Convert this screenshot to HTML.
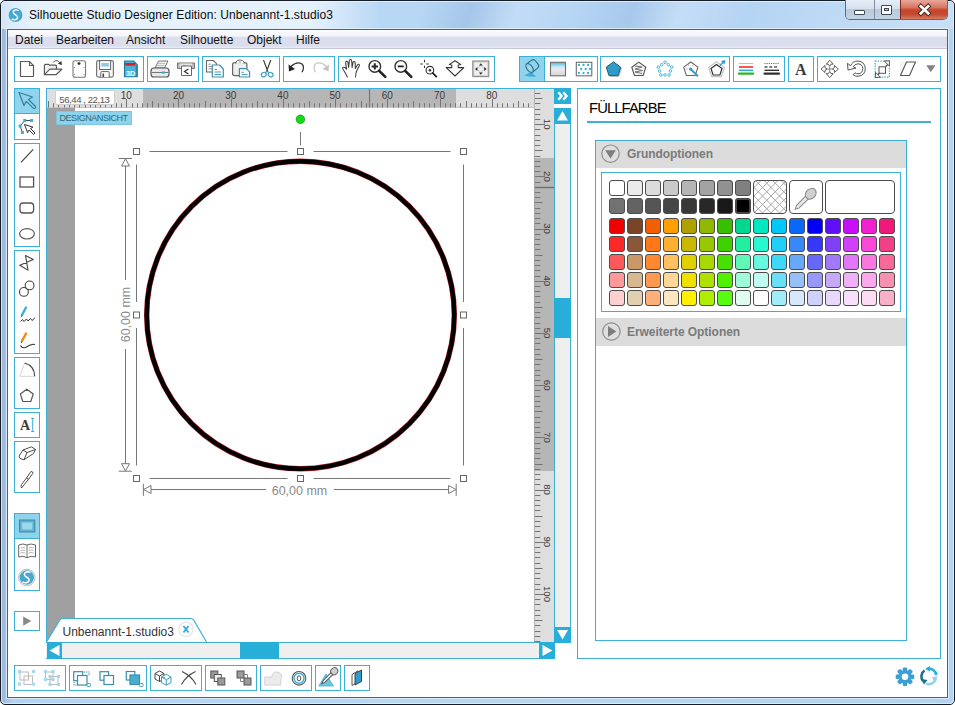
<!DOCTYPE html>
<html><head><meta charset="utf-8">
<style>
*{margin:0;padding:0;box-sizing:border-box}
html,body{width:955px;height:705px;overflow:hidden;background:#fff;font-family:"Liberation Sans",sans-serif}
.a{position:absolute}
.t{position:absolute;white-space:nowrap;line-height:1}
svg{position:absolute;overflow:visible}
</style></head><body>
<div class="a" style="left:0px;top:0px;width:955px;height:705px;border:1px solid #161d26;border-radius:5px 5px 5px 5px;background:linear-gradient(90deg,#98b4d6 0,#a4c2e6 5px,#b4d3f3 12px,#b8d7f5 40%,#b3d3f3 100%)"></div>
<div class="a" style="left:1px;top:1px;width:953px;height:703px;border:1px solid rgba(235,244,252,.75);border-radius:4px"></div>
<div class="a" style="left:2px;top:2px;width:951px;height:27px;border-radius:5px 5px 0 0;background:linear-gradient(110deg,rgba(255,255,255,0) 0,rgba(255,255,255,0) 44%,rgba(150,185,225,.55) 49%,rgba(255,255,255,.15) 54%,rgba(255,255,255,0) 60%,rgba(150,185,225,.45) 66%,rgba(255,255,255,.2) 71%,rgba(255,255,255,0) 78%,rgba(255,255,255,.25) 95%)"></div>
<div class="a" style="left:1px;top:1px;width:380px;height:28px;border-radius:5px 0 0 0;background:linear-gradient(90deg,rgba(225,238,251,.8) 0,rgba(236,245,253,.88) 8%,rgba(236,245,253,.88) 82%,rgba(230,240,252,0) 100%)"></div>
<div class="a" style="left:6px;top:28px;width:943px;height:671px;border:1px solid rgba(225,238,250,.85)"></div>
<svg style="left:7px;top:7px" width="17" height="17" viewBox="0 0 17 17" ><circle cx="8.5" cy="8" r="7.6" fill="#e9f1f8"/><circle cx="8.5" cy="8" r="7" fill="#47a9d0"/><path d="M11.2 3.3C9.2 2.3 5.6 3.2 6.5 5.9 7.3 8 11.2 8 10.6 10.7 10.1 12.6 7.4 13.3 5.1 12.2" stroke="#fff" stroke-width="1.4" fill="none" stroke-linecap="round"/></svg>
<div class="t" style="left:29px;top:8.5px;font-size:12px;letter-spacing:0.07px;color:#0c0c0c">Silhouette Studio Designer Edition: Unbenannt-1.studio3</div>
<div class="a" style="left:845px;top:0;width:103px;height:20px;border:1px solid #5d6b7d;border-top:none;border-radius:0 0 5px 5px;overflow:hidden">
 <div class="a" style="left:0;top:0;width:28px;height:19px;background:linear-gradient(#e7eef7 0,#d5e0ed 45%,#b9c9dc 50%,#c5d3e3 100%)"></div>
 <div class="a" style="left:28px;top:0;width:26px;height:19px;border-left:1px solid #7f8ea2;background:linear-gradient(#e7eef7 0,#d5e0ed 45%,#b9c9dc 50%,#c5d3e3 100%)"></div>
 <div class="a" style="left:54px;top:0;width:48px;height:19px;border-left:1px solid #7a2a1c;background:linear-gradient(#e8a89a 0,#d67560 40%,#c8452a 52%,#c34a2e 75%,#d77a5e 100%)"></div>
</div>
<div class="a" style="left:854px;top:10px;width:11px;height:5px;border:1px solid #3d4a5a;background:#fff;border-radius:1px"></div>
<div class="a" style="left:881px;top:5px;width:11px;height:10px;border:1px solid #3d4a5a;background:#fff;border-radius:1px"></div>
<div class="a" style="left:884px;top:8px;width:5px;height:3px;border:1px solid #3d4a5a;background:#b9c7d8"></div>
<svg style="left:0px;top:0px" width="955" height="30" viewBox="0 0 955 30" ><path d="M920.8 6.3 L928.2 13.3 M928.2 6.3 L920.8 13.3" stroke="#4a2622" stroke-width="4.6" stroke-linecap="square"/><path d="M920.8 6.3 L928.2 13.3 M928.2 6.3 L920.8 13.3" stroke="#fff" stroke-width="2.7" stroke-linecap="square"/></svg>
<div class="a" style="left:7px;top:29px;width:941px;height:669px;border:1px solid #56616e;background:#fff"></div>
<div class="a" style="left:8px;top:30px;width:939px;height:19px;background:linear-gradient(#fcfcfe 0,#f3f4f9 6px,#dcdfee 7.5px,#d9ddec 16px,#e6e9f3 17px,#e6e9f3 18px,#c3c8d8 18px)"></div>
<div class="t" style="left:15px;top:34px;font-size:12px;color:#141414">Datei</div>
<div class="t" style="left:56px;top:34px;font-size:12px;color:#141414">Bearbeiten</div>
<div class="t" style="left:126px;top:34px;font-size:12px;color:#141414">Ansicht</div>
<div class="t" style="left:180px;top:34px;font-size:12px;color:#141414">Silhouette</div>
<div class="t" style="left:247px;top:34px;font-size:12px;color:#141414">Objekt</div>
<div class="t" style="left:296px;top:34px;font-size:12px;color:#141414">Hilfe</div>
<div class="a" style="left:14px;top:56px;width:130px;height:26px;border:1px solid #3cb0d7;background:#fff"></div>
<div class="a" style="left:147px;top:56px;width:52px;height:26px;border:1px solid #3cb0d7;background:#fff"></div>
<div class="a" style="left:202px;top:56px;width:78px;height:26px;border:1px solid #3cb0d7;background:#fff"></div>
<div class="a" style="left:283px;top:56px;width:52px;height:26px;border:1px solid #3cb0d7;background:#fff"></div>
<div class="a" style="left:338px;top:56px;width:157px;height:26px;border:1px solid #3cb0d7;background:#fff"></div>
<div class="a" style="left:519px;top:56px;width:79px;height:26px;border:1px solid #3cb0d7;background:#fff"></div>
<div class="a" style="left:600px;top:56px;width:130px;height:26px;border:1px solid #3cb0d7;background:#fff"></div>
<div class="a" style="left:733px;top:56px;width:52px;height:26px;border:1px solid #3cb0d7;background:#fff"></div>
<div class="a" style="left:788px;top:56px;width:26px;height:26px;border:1px solid #3cb0d7;background:#fff"></div>
<div class="a" style="left:817px;top:56px;width:124px;height:26px;border:1px solid #3cb0d7;background:#fff"></div>
<div class="a" style="left:520px;top:57px;width:25px;height:24px;background:#8fd4ec;border-right:1px solid #3cb0d7"></div>
<div class="a" style="left:14px;top:88px;width:26px;height:52px;border:1px solid #3cb0d7;background:#fff"></div>
<div class="a" style="left:14px;top:143px;width:26px;height:104px;border:1px solid #3cb0d7;background:#fff"></div>
<div class="a" style="left:14px;top:250px;width:26px;height:104px;border:1px solid #3cb0d7;background:#fff"></div>
<div class="a" style="left:14px;top:357px;width:26px;height:52px;border:1px solid #3cb0d7;background:#fff"></div>
<div class="a" style="left:14px;top:412px;width:26px;height:26px;border:1px solid #3cb0d7;background:#fff"></div>
<div class="a" style="left:14px;top:441px;width:26px;height:52px;border:1px solid #3cb0d7;background:#fff"></div>
<div class="a" style="left:14px;top:513px;width:26px;height:78px;border:1px solid #3cb0d7;background:#fff"></div>
<div class="a" style="left:14px;top:611px;width:26px;height:20px;border:1px solid #3cb0d7;background:#fff"></div>
<div class="a" style="left:15px;top:89px;width:24px;height:25px;background:#8fd4ec;border-bottom:1px solid #3cb0d7"></div>
<div class="a" style="left:15px;top:514px;width:24px;height:25px;background:#8fd4ec;border-bottom:1px solid #3cb0d7"></div>
<div class="a" style="left:14px;top:665px;width:52px;height:26px;border:1px solid #3cb0d7;background:#fff"></div>
<div class="a" style="left:69px;top:665px;width:78px;height:26px;border:1px solid #3cb0d7;background:#fff"></div>
<div class="a" style="left:150px;top:665px;width:52px;height:26px;border:1px solid #3cb0d7;background:#fff"></div>
<div class="a" style="left:205px;top:665px;width:52px;height:26px;border:1px solid #3cb0d7;background:#fff"></div>
<div class="a" style="left:260px;top:665px;width:52px;height:26px;border:1px solid #3cb0d7;background:#fff"></div>
<div class="a" style="left:315px;top:665px;width:26px;height:26px;border:1px solid #3cb0d7;background:#fff"></div>
<div class="a" style="left:344px;top:665px;width:26px;height:26px;border:1px solid #3cb0d7;background:#fff"></div>
<div class="a" style="left:46px;top:88px;width:509px;height:571px;border:1px solid #3cb0d7;border-right:none;background:#fff"></div>
<div class="a" style="left:47px;top:89px;width:487px;height:19px;background:#dedede"></div>
<div class="a" style="left:143px;top:89px;width:313px;height:19px;background:#b6b6b6"></div>
<div class="a" style="left:47px;top:107px;width:507px;height:1px;background:#c9c9c9"></div>
<div class="a" style="left:534px;top:89px;width:20px;height:553px;background:#dedede;border-left:1px solid #b4b4b4"></div>
<div class="a" style="left:534px;top:158px;width:20px;height:313px;background:#b6b6b6;border-left:1px solid #a2a2a2"></div>
<div class="a" style="left:47px;top:108px;width:28px;height:534px;background:#a0a0a0"></div>
<div class="a" style="left:554px;top:88px;width:17px;height:16px;background:#27aed9"></div>
<div class="a" style="left:554px;top:108px;width:17px;height:535px;background:#efefef;border:1px solid #3cb0d7;border-top:none"></div>
<div class="a" style="left:554px;top:108px;width:17px;height:16px;background:#27aed9"></div>
<div class="a" style="left:554px;top:298px;width:17px;height:40px;background:#27aed9"></div>
<div class="a" style="left:554px;top:627px;width:17px;height:16px;background:#27aed9"></div>
<div class="a" style="left:46px;top:642px;width:509px;height:17px;background:#efefef;border-top:1px solid #3cb0d7;border-bottom:1px solid #3cb0d7"></div>
<div class="a" style="left:47px;top:642px;width:15px;height:17px;background:#27aed9"></div>
<div class="a" style="left:240px;top:642px;width:39px;height:17px;background:#27aed9"></div>
<div class="a" style="left:539px;top:642px;width:16px;height:17px;background:#27aed9"></div>
<div class="a" style="left:577px;top:88px;width:364px;height:571px;border:1px solid #3cb0d7;background:#fff"></div>
<div class="t" style="left:589px;top:101px;font-size:14.8px;color:#000;letter-spacing:-0.9px">FÜLLFARBE</div>
<div class="a" style="left:587px;top:121px;width:344px;height:2px;background:#3cb0d7"></div>
<div class="a" style="left:595px;top:140px;width:312px;height:501px;border:1px solid #3cb0d7;background:#fff"></div>
<div class="a" style="left:596px;top:141px;width:310px;height:27px;background:#dcdcdc"></div>
<div class="t" style="left:627px;top:148px;font-size:12px;color:#7a7a7a;font-weight:bold;letter-spacing:-0.05px">Grundoptionen</div>
<div class="a" style="left:601px;top:172px;width:300px;height:140px;border:1px solid #3cb0d7;background:#fff"></div>
<div class="a" style="left:596px;top:318px;width:310px;height:28px;background:#dcdcdc"></div>
<div class="t" style="left:627px;top:326px;font-size:12px;color:#7a7a7a;font-weight:bold;letter-spacing:-0.05px">Erweiterte Optionen</div>
<div class="a" style="left:609px;top:180px;width:16px;height:16px;background:#ffffff;border:1px solid #4d4d4d;border-radius:3px;"></div>
<div class="a" style="left:627px;top:180px;width:16px;height:16px;background:#ebebeb;border:1px solid #4d4d4d;border-radius:3px;"></div>
<div class="a" style="left:645px;top:180px;width:16px;height:16px;background:#dcdcdc;border:1px solid #4d4d4d;border-radius:3px;"></div>
<div class="a" style="left:663px;top:180px;width:16px;height:16px;background:#c9c9c9;border:1px solid #4d4d4d;border-radius:3px;"></div>
<div class="a" style="left:681px;top:180px;width:16px;height:16px;background:#b5b5b5;border:1px solid #4d4d4d;border-radius:3px;"></div>
<div class="a" style="left:699px;top:180px;width:16px;height:16px;background:#a3a3a3;border:1px solid #4d4d4d;border-radius:3px;"></div>
<div class="a" style="left:717px;top:180px;width:16px;height:16px;background:#919191;border:1px solid #4d4d4d;border-radius:3px;"></div>
<div class="a" style="left:735px;top:180px;width:16px;height:16px;background:#808080;border:1px solid #4d4d4d;border-radius:3px;"></div>
<div class="a" style="left:609px;top:198px;width:16px;height:16px;background:#727272;border:1px solid #4d4d4d;border-radius:3px;"></div>
<div class="a" style="left:627px;top:198px;width:16px;height:16px;background:#636363;border:1px solid #4d4d4d;border-radius:3px;"></div>
<div class="a" style="left:645px;top:198px;width:16px;height:16px;background:#555555;border:1px solid #4d4d4d;border-radius:3px;"></div>
<div class="a" style="left:663px;top:198px;width:16px;height:16px;background:#464646;border:1px solid #4d4d4d;border-radius:3px;"></div>
<div class="a" style="left:681px;top:198px;width:16px;height:16px;background:#383838;border:1px solid #4d4d4d;border-radius:3px;"></div>
<div class="a" style="left:699px;top:198px;width:16px;height:16px;background:#282828;border:1px solid #4d4d4d;border-radius:3px;"></div>
<div class="a" style="left:717px;top:198px;width:16px;height:16px;background:#181818;border:1px solid #4d4d4d;border-radius:3px;"></div>
<div class="a" style="left:735px;top:198px;width:16px;height:16px;background:#000000;border:1px solid #4d4d4d;border-radius:3px;border:2px solid #474747"></div>
<div class="a" style="left:609px;top:218px;width:16px;height:16px;background:#f00000;border:1px solid #4d4d4d;border-radius:3px;"></div>
<div class="a" style="left:627px;top:218px;width:16px;height:16px;background:#7a4428;border:1px solid #4d4d4d;border-radius:3px;"></div>
<div class="a" style="left:645px;top:218px;width:16px;height:16px;background:#f06000;border:1px solid #4d4d4d;border-radius:3px;"></div>
<div class="a" style="left:663px;top:218px;width:16px;height:16px;background:#ffa000;border:1px solid #4d4d4d;border-radius:3px;"></div>
<div class="a" style="left:681px;top:218px;width:16px;height:16px;background:#b0a000;border:1px solid #4d4d4d;border-radius:3px;"></div>
<div class="a" style="left:699px;top:218px;width:16px;height:16px;background:#90b800;border:1px solid #4d4d4d;border-radius:3px;"></div>
<div class="a" style="left:717px;top:218px;width:16px;height:16px;background:#38c000;border:1px solid #4d4d4d;border-radius:3px;"></div>
<div class="a" style="left:735px;top:218px;width:16px;height:16px;background:#00d890;border:1px solid #4d4d4d;border-radius:3px;"></div>
<div class="a" style="left:753px;top:218px;width:16px;height:16px;background:#00e8c0;border:1px solid #4d4d4d;border-radius:3px;"></div>
<div class="a" style="left:771px;top:218px;width:16px;height:16px;background:#00c8f8;border:1px solid #4d4d4d;border-radius:3px;"></div>
<div class="a" style="left:789px;top:218px;width:16px;height:16px;background:#0868f8;border:1px solid #4d4d4d;border-radius:3px;"></div>
<div class="a" style="left:807px;top:218px;width:16px;height:16px;background:#0000f8;border:1px solid #4d4d4d;border-radius:3px;"></div>
<div class="a" style="left:825px;top:218px;width:16px;height:16px;background:#6010f8;border:1px solid #4d4d4d;border-radius:3px;"></div>
<div class="a" style="left:843px;top:218px;width:16px;height:16px;background:#c810f8;border:1px solid #4d4d4d;border-radius:3px;"></div>
<div class="a" style="left:861px;top:218px;width:16px;height:16px;background:#f020d0;border:1px solid #4d4d4d;border-radius:3px;"></div>
<div class="a" style="left:879px;top:218px;width:16px;height:16px;background:#f01878;border:1px solid #4d4d4d;border-radius:3px;"></div>
<div class="a" style="left:609px;top:236px;width:16px;height:16px;background:#ff2828;border:1px solid #4d4d4d;border-radius:3px;"></div>
<div class="a" style="left:627px;top:236px;width:16px;height:16px;background:#8a5838;border:1px solid #4d4d4d;border-radius:3px;"></div>
<div class="a" style="left:645px;top:236px;width:16px;height:16px;background:#ff7818;border:1px solid #4d4d4d;border-radius:3px;"></div>
<div class="a" style="left:663px;top:236px;width:16px;height:16px;background:#ffb030;border:1px solid #4d4d4d;border-radius:3px;"></div>
<div class="a" style="left:681px;top:236px;width:16px;height:16px;background:#c8b800;border:1px solid #4d4d4d;border-radius:3px;"></div>
<div class="a" style="left:699px;top:236px;width:16px;height:16px;background:#98c800;border:1px solid #4d4d4d;border-radius:3px;"></div>
<div class="a" style="left:717px;top:236px;width:16px;height:16px;background:#40d000;border:1px solid #4d4d4d;border-radius:3px;"></div>
<div class="a" style="left:735px;top:236px;width:16px;height:16px;background:#20f0a0;border:1px solid #4d4d4d;border-radius:3px;"></div>
<div class="a" style="left:753px;top:236px;width:16px;height:16px;background:#28f8d0;border:1px solid #4d4d4d;border-radius:3px;"></div>
<div class="a" style="left:771px;top:236px;width:16px;height:16px;background:#20d0f8;border:1px solid #4d4d4d;border-radius:3px;"></div>
<div class="a" style="left:789px;top:236px;width:16px;height:16px;background:#3888f8;border:1px solid #4d4d4d;border-radius:3px;"></div>
<div class="a" style="left:807px;top:236px;width:16px;height:16px;background:#3838f8;border:1px solid #4d4d4d;border-radius:3px;"></div>
<div class="a" style="left:825px;top:236px;width:16px;height:16px;background:#8040f8;border:1px solid #4d4d4d;border-radius:3px;"></div>
<div class="a" style="left:843px;top:236px;width:16px;height:16px;background:#d040f8;border:1px solid #4d4d4d;border-radius:3px;"></div>
<div class="a" style="left:861px;top:236px;width:16px;height:16px;background:#f848d8;border:1px solid #4d4d4d;border-radius:3px;"></div>
<div class="a" style="left:879px;top:236px;width:16px;height:16px;background:#f04088;border:1px solid #4d4d4d;border-radius:3px;"></div>
<div class="a" style="left:609px;top:254px;width:16px;height:16px;background:#ff5a5a;border:1px solid #4d4d4d;border-radius:3px;"></div>
<div class="a" style="left:627px;top:254px;width:16px;height:16px;background:#c89868;border:1px solid #4d4d4d;border-radius:3px;"></div>
<div class="a" style="left:645px;top:254px;width:16px;height:16px;background:#ff8830;border:1px solid #4d4d4d;border-radius:3px;"></div>
<div class="a" style="left:663px;top:254px;width:16px;height:16px;background:#ffc060;border:1px solid #4d4d4d;border-radius:3px;"></div>
<div class="a" style="left:681px;top:254px;width:16px;height:16px;background:#e0d000;border:1px solid #4d4d4d;border-radius:3px;"></div>
<div class="a" style="left:699px;top:254px;width:16px;height:16px;background:#a8d800;border:1px solid #4d4d4d;border-radius:3px;"></div>
<div class="a" style="left:717px;top:254px;width:16px;height:16px;background:#48e000;border:1px solid #4d4d4d;border-radius:3px;"></div>
<div class="a" style="left:735px;top:254px;width:16px;height:16px;background:#60f8b8;border:1px solid #4d4d4d;border-radius:3px;"></div>
<div class="a" style="left:753px;top:254px;width:16px;height:16px;background:#68f8e0;border:1px solid #4d4d4d;border-radius:3px;"></div>
<div class="a" style="left:771px;top:254px;width:16px;height:16px;background:#40d8f8;border:1px solid #4d4d4d;border-radius:3px;"></div>
<div class="a" style="left:789px;top:254px;width:16px;height:16px;background:#68a8f8;border:1px solid #4d4d4d;border-radius:3px;"></div>
<div class="a" style="left:807px;top:254px;width:16px;height:16px;background:#6868f8;border:1px solid #4d4d4d;border-radius:3px;"></div>
<div class="a" style="left:825px;top:254px;width:16px;height:16px;background:#a078f8;border:1px solid #4d4d4d;border-radius:3px;"></div>
<div class="a" style="left:843px;top:254px;width:16px;height:16px;background:#e078f8;border:1px solid #4d4d4d;border-radius:3px;"></div>
<div class="a" style="left:861px;top:254px;width:16px;height:16px;background:#f878e0;border:1px solid #4d4d4d;border-radius:3px;"></div>
<div class="a" style="left:879px;top:254px;width:16px;height:16px;background:#f86898;border:1px solid #4d4d4d;border-radius:3px;"></div>
<div class="a" style="left:609px;top:272px;width:16px;height:16px;background:#ff9898;border:1px solid #4d4d4d;border-radius:3px;"></div>
<div class="a" style="left:627px;top:272px;width:16px;height:16px;background:#d8b890;border:1px solid #4d4d4d;border-radius:3px;"></div>
<div class="a" style="left:645px;top:272px;width:16px;height:16px;background:#ff9850;border:1px solid #4d4d4d;border-radius:3px;"></div>
<div class="a" style="left:663px;top:272px;width:16px;height:16px;background:#ffd898;border:1px solid #4d4d4d;border-radius:3px;"></div>
<div class="a" style="left:681px;top:272px;width:16px;height:16px;background:#f0e000;border:1px solid #4d4d4d;border-radius:3px;"></div>
<div class="a" style="left:699px;top:272px;width:16px;height:16px;background:#b0e000;border:1px solid #4d4d4d;border-radius:3px;"></div>
<div class="a" style="left:717px;top:272px;width:16px;height:16px;background:#50f000;border:1px solid #4d4d4d;border-radius:3px;"></div>
<div class="a" style="left:735px;top:272px;width:16px;height:16px;background:#a0fcd8;border:1px solid #4d4d4d;border-radius:3px;"></div>
<div class="a" style="left:753px;top:272px;width:16px;height:16px;background:#c0fcf0;border:1px solid #4d4d4d;border-radius:3px;"></div>
<div class="a" style="left:771px;top:272px;width:16px;height:16px;background:#68e0f8;border:1px solid #4d4d4d;border-radius:3px;"></div>
<div class="a" style="left:789px;top:272px;width:16px;height:16px;background:#98c0f8;border:1px solid #4d4d4d;border-radius:3px;"></div>
<div class="a" style="left:807px;top:272px;width:16px;height:16px;background:#9898f8;border:1px solid #4d4d4d;border-radius:3px;"></div>
<div class="a" style="left:825px;top:272px;width:16px;height:16px;background:#c8a8f8;border:1px solid #4d4d4d;border-radius:3px;"></div>
<div class="a" style="left:843px;top:272px;width:16px;height:16px;background:#f0b0f8;border:1px solid #4d4d4d;border-radius:3px;"></div>
<div class="a" style="left:861px;top:272px;width:16px;height:16px;background:#fca8ec;border:1px solid #4d4d4d;border-radius:3px;"></div>
<div class="a" style="left:879px;top:272px;width:16px;height:16px;background:#f890b0;border:1px solid #4d4d4d;border-radius:3px;"></div>
<div class="a" style="left:609px;top:290px;width:16px;height:16px;background:#ffd0d0;border:1px solid #4d4d4d;border-radius:3px;"></div>
<div class="a" style="left:627px;top:290px;width:16px;height:16px;background:#e0d0b0;border:1px solid #4d4d4d;border-radius:3px;"></div>
<div class="a" style="left:645px;top:290px;width:16px;height:16px;background:#ffb078;border:1px solid #4d4d4d;border-radius:3px;"></div>
<div class="a" style="left:663px;top:290px;width:16px;height:16px;background:#ffe8c0;border:1px solid #4d4d4d;border-radius:3px;"></div>
<div class="a" style="left:681px;top:290px;width:16px;height:16px;background:#fff000;border:1px solid #4d4d4d;border-radius:3px;"></div>
<div class="a" style="left:699px;top:290px;width:16px;height:16px;background:#b0ee00;border:1px solid #4d4d4d;border-radius:3px;"></div>
<div class="a" style="left:717px;top:290px;width:16px;height:16px;background:#58fc10;border:1px solid #4d4d4d;border-radius:3px;"></div>
<div class="a" style="left:735px;top:290px;width:16px;height:16px;background:#e0fcf0;border:1px solid #4d4d4d;border-radius:3px;"></div>
<div class="a" style="left:753px;top:290px;width:16px;height:16px;background:#ffffff;border:1px solid #4d4d4d;border-radius:3px;"></div>
<div class="a" style="left:771px;top:290px;width:16px;height:16px;background:#a0ecf8;border:1px solid #4d4d4d;border-radius:3px;"></div>
<div class="a" style="left:789px;top:290px;width:16px;height:16px;background:#d8e8fc;border:1px solid #4d4d4d;border-radius:3px;"></div>
<div class="a" style="left:807px;top:290px;width:16px;height:16px;background:#d0d0fc;border:1px solid #4d4d4d;border-radius:3px;"></div>
<div class="a" style="left:825px;top:290px;width:16px;height:16px;background:#e8d8fc;border:1px solid #4d4d4d;border-radius:3px;"></div>
<div class="a" style="left:843px;top:290px;width:16px;height:16px;background:#f8e0fc;border:1px solid #4d4d4d;border-radius:3px;"></div>
<div class="a" style="left:861px;top:290px;width:16px;height:16px;background:#fcdcf4;border:1px solid #4d4d4d;border-radius:3px;"></div>
<div class="a" style="left:879px;top:290px;width:16px;height:16px;background:#f8b0c8;border:1px solid #4d4d4d;border-radius:3px;"></div>
<div class="a" style="left:753px;top:180px;width:34px;height:34px;border:1px solid #4d4d4d;border-radius:4px;background:#fff;overflow:hidden"><svg style="left:0;top:0" width="32" height="32"><path d="M-32.0 0 L2.0 34 M-2.0 0 L-36.0 34" stroke="#9a9a9a" stroke-width="0.85"/><path d="M-23.5 0 L10.5 34 M6.5 0 L-27.5 34" stroke="#9a9a9a" stroke-width="0.85"/><path d="M-15.0 0 L19.0 34 M15.0 0 L-19.0 34" stroke="#9a9a9a" stroke-width="0.85"/><path d="M-6.5 0 L27.5 34 M23.5 0 L-10.5 34" stroke="#9a9a9a" stroke-width="0.85"/><path d="M2.0 0 L36.0 34 M32.0 0 L-2.0 34" stroke="#9a9a9a" stroke-width="0.85"/><path d="M10.5 0 L44.5 34 M40.5 0 L6.5 34" stroke="#9a9a9a" stroke-width="0.85"/><path d="M19.0 0 L53.0 34 M49.0 0 L15.0 34" stroke="#9a9a9a" stroke-width="0.85"/><path d="M27.5 0 L61.5 34 M57.5 0 L23.5 34" stroke="#9a9a9a" stroke-width="0.85"/><path d="M36.0 0 L70.0 34 M66.0 0 L32.0 34" stroke="#9a9a9a" stroke-width="0.85"/><path d="M44.5 0 L78.5 34 M74.5 0 L40.5 34" stroke="#9a9a9a" stroke-width="0.85"/></svg></div>
<div class="a" style="left:789px;top:180px;width:34px;height:34px;border:1px solid #4d4d4d;border-radius:4px;background:#fff"></div>
<div class="a" style="left:825px;top:180px;width:70px;height:34px;border:1px solid #4d4d4d;border-radius:4px;background:#fff"></div>
<svg style="left:0;top:0" width="955" height="705" viewBox="0 0 955 705"><g transform="translate(804,200.5) rotate(45)"><ellipse cx="0" cy="-9.5" rx="4.8" ry="6" fill="#d0d0d0" stroke="#888" stroke-width="1"/><path d="M-2 -3.8 L-1.8 9 L0 12.5 L1.8 9 L2 -3.8Z" fill="#e8e8e8" stroke="#888" stroke-width="1"/></g><circle cx="610.5" cy="153.7" r="8.7" fill="#dedede" stroke="#8e8e8e" stroke-width="1.2"/><path d="M605.2 150.3 H615.8 L610.5 158.5Z" fill="#7d7d7d"/><circle cx="611.4" cy="331.5" r="8.7" fill="#dedede" stroke="#8e8e8e" stroke-width="1.2"/><path d="M608 326 V337 L616.3 331.5Z" fill="#7d7d7d"/><path d="M20.5 61.5 H29.5 L33.5 65.5 V76 Q33.5 76.5 33 76.5 H21 Q20.5 76.5 20.5 76Z" fill="#fff" stroke="#5a5a5a" stroke-width="1.2"/><path d="M29.5 61.5 V65.5 H33.5" fill="none" stroke="#5a5a5a" stroke-width="1.1"/><path d="M44.4 74.6 V65.5 Q44.4 64.3 45.6 64.3 H48.2 Q49 64.3 49.5 65.2 H55.5 Q56.5 65.2 56.5 66.3 V69.2" fill="#f0f0f0" stroke="#5a5a5a" stroke-width="1.2" stroke-linejoin="round"/><path d="M44.4 74.7 L49.9 69.2 H61.8 L56.1 74.7Z" fill="#fff" stroke="#5a5a5a" stroke-width="1.2" stroke-linejoin="round"/><path d="M53.2 62.3 Q55 59.8 57.5 60.8 Q58.8 61.4 59.6 62.3" fill="none" stroke="#555" stroke-width="1"/><path d="M61.5 61 L57.8 63.5 L61.8 65.2Z" fill="#333"/><rect x="73" y="60.7" width="12.5" height="16.5" rx="2" fill="#fff" stroke="#7a7a7a" stroke-width="1.1"/><path d="M77.5 63.5 H80.5 M79 62 V65" stroke="#333" stroke-width="1.3"/><path d="M74 67.5 H75 M84.5 67.5 H83.5 M74 74.5 H75 M84.5 74.5 H83.5" stroke="#999" stroke-width="1"/><rect x="96.6" y="60.6" width="16.8" height="16.5" rx="1.8" fill="#f6f6f6" stroke="#777" stroke-width="1.2"/><rect x="99.6" y="60.6" width="11" height="8.9" fill="#fff" stroke="#666" stroke-width="1"/><rect x="101.3" y="63" width="7.6" height="3.6" fill="#8ccbe2"/><path d="M100.8 77 V72.5 Q100.8 71.6 101.7 71.6 H108.3 Q109.2 71.6 109.2 72.5 V77" fill="#fff" stroke="#666" stroke-width="1"/><rect x="102.5" y="73.5" width="1.6" height="3.5" fill="#444"/><path d="M124.5 61 H133.5 L137.3 64.8 V76.8 H124.5Z" fill="#4db2d8" stroke="#23789a" stroke-width="1.1" stroke-linejoin="round"/><path d="M136.3 64.8 V76" stroke="#2a86a8" stroke-width="1.2"/><rect x="125.2" y="63" width="10" height="2.6" fill="#dd1c1c"/><text x="126" y="75.6" font-family="Liberation Sans" font-weight="bold" font-size="7.3" fill="#fff">3D</text><path d="M155 68 L158.5 61 H168 L164.5 68Z" fill="#f0f0f0" stroke="#777" stroke-width="1"/><path d="M157 63.5 H165.5 M156 65.5 H164.5" stroke="#aaa" stroke-width="0.7"/><path d="M151 71 Q151 68 154 68 H166 Q169 68 169 71 V74.5 Q169 77 166 77 H154 Q151 77 151 74.5Z" fill="#e8e8e8" stroke="#555" stroke-width="1.2"/><path d="M151.5 72.5 H168.5" stroke="#777" stroke-width="1"/><rect x="162" y="71.5" width="3" height="2" fill="#35a8d8"/><path d="M177.5 63 H194.5 V68.5 H177.5Z" fill="#bdbdbd" stroke="#777" stroke-width="1"/><rect x="180" y="63.5" width="12" height="4" fill="#e4e4e4"/><path d="M181.5 66 H191.5 V75.5 H181.5Z" fill="#fff" stroke="#666" stroke-width="1"/><path d="M188.5 69 L184.5 71.5 L188.5 74" fill="none" stroke="#333" stroke-width="1.2"/><path d="M183 65.5 H186" stroke="#35a8d8" stroke-width="1"/><path d="M206.5 60.5 H213.3 L216.5 63.7 V72 H206.5Z" fill="#fff" stroke="#666" stroke-width="1.1" stroke-linejoin="round"/><path d="M208.5 64.2 H211 M208.5 66.5 H212 M208.5 68.8 H212" stroke="#888" stroke-width="0.9"/><path d="M212.3 65 H219.3 L223.3 69 V77 H212.3Z" fill="#fff" stroke="#3d8fa8" stroke-width="1.2" stroke-linejoin="round"/><path d="M214.5 69.5 H217 M214.5 72 H221 M214.5 74.5 H221" stroke="#4d9ab2" stroke-width="1"/><rect x="232.6" y="62.6" width="14.3" height="13" rx="2" fill="#efefef" stroke="#666" stroke-width="1.2"/><path d="M236 63.5 V62 Q236.5 60 240 60 Q243.5 60 244 62 V63.5" fill="#fff" stroke="#666" stroke-width="1"/><circle cx="240" cy="62" r="0.8" fill="#888"/><path d="M239.4 68.6 H246.3 L249.6 71.9 V77 H239.4Z" fill="#fff" stroke="#3d8fa8" stroke-width="1.2" stroke-linejoin="round"/><path d="M241.5 72.3 H244 M241.5 74.6 H247.5" stroke="#4d9ab2" stroke-width="1"/><path d="M263.5 60 L267.8 71.5 M270.8 60 L266.5 71.5" stroke="#333" stroke-width="1.1"/><ellipse cx="263.8" cy="74.6" rx="2.5" ry="2.1" transform="rotate(-30 263.8 74.6)" fill="none" stroke="#3b9dc0" stroke-width="1.15"/><ellipse cx="270.6" cy="74.6" rx="2.5" ry="2.1" transform="rotate(30 270.6 74.6)" fill="none" stroke="#3b9dc0" stroke-width="1.15"/><path d="M265.8 72.5 L267.2 71 L268.6 72.5" fill="none" stroke="#3b9dc0" stroke-width="1.1"/><path d="M291 66.5 Q297 61 302 64 Q305 67 302 72.3" fill="none" stroke="#333" stroke-width="1.3"/><path d="M288.5 64.5 L289 71.5 L295 69Z" fill="#222"/><path d="M326.5 66.5 Q320.5 61 315.5 64 Q312.5 67 315.5 72.3" fill="none" stroke="#c8c8c8" stroke-width="1.3"/><path d="M329 64.5 L328.5 71.5 L322.5 69Z" fill="#c4c4c4"/><path d="M347.3 77 Q345.5 73 343.8 70.5 Q342.3 68.6 342.6 67.8 Q343.3 66.8 344.8 67.4 L346.6 69.2 L345.6 62.8 Q345.7 61.2 346.8 61.2 Q347.8 61.3 348 62.6 L348.6 67.5 L349.3 60.8 Q349.6 59.5 350.6 59.6 Q351.6 59.8 351.7 61 L352.1 67.5 L353 62.5 Q353.4 61.3 354.3 61.5 Q355.2 61.7 355.2 63 L355.3 68.5 L357.3 65 Q358.2 63.9 359 64.3 Q359.8 64.9 359.2 66.1 L356.6 71 Q355.7 73 355.6 77" fill="#fff" stroke="#3a3a3a" stroke-width="1.05" stroke-linejoin="round" stroke-linecap="round"/><circle cx="374.8" cy="66.4" r="5.8" fill="#fff" stroke="#333" stroke-width="1.4"/><path d="M379.2 70.8 L385.3 76.9" stroke="#222" stroke-width="2.6" stroke-linecap="round"/><path d="M371.6 66.4 H378 M374.8 63.2 V69.6" stroke="#2a2a2a" stroke-width="2"/><circle cx="400.8" cy="66.4" r="5.8" fill="#fff" stroke="#333" stroke-width="1.4"/><path d="M405.2 70.8 L411.3 76.9" stroke="#222" stroke-width="2.6" stroke-linecap="round"/><path d="M397.8 66.4 H403.8" stroke="#222" stroke-width="1.8"/><path d="M420.3 64 H422.8 M426.2 64 H428.7 M424.5 59.8 V62.3 M424.5 65.7 V68" stroke="#333" stroke-width="1"/><circle cx="429.9" cy="70.2" r="3.8" fill="#fff" stroke="#333" stroke-width="1.15"/><path d="M432.6 72.9 L436.3 76.6" stroke="#222" stroke-width="1.9" stroke-linecap="round"/><circle cx="429.9" cy="70.2" r="1.3" fill="#333"/><path d="M455 60.8 L460.8 64.6 L458.2 65 V67.6 H463.8 L455 76 L446.2 67.6 H451.8 V65 L449.2 64.6Z" fill="#fff" stroke="#333" stroke-width="1.05" stroke-linejoin="round"/><rect x="472.8" y="61" width="16" height="15.6" fill="#d6d6d6" stroke="#8a8a8a" stroke-width="1.1"/><rect x="474.5" y="62.7" width="12.6" height="12.2" fill="#f0f0f0"/><path d="M480.8 65.5 L485 69 L480.8 72.5 L476.6 69Z" fill="none" stroke="#bbb" stroke-width="0.8"/><path d="M480.8 63.2 L478.9 65.6 H482.7Z M480.8 74.8 L478.9 72.4 H482.7Z M475 69 L477.4 67.1 V70.9Z M486.6 69 L484.2 67.1 V70.9Z" fill="#333"/><path d="M524 75.3 Q527.5 74.2 529.5 72.8 L531.8 71.2 Q532.3 73.8 534.2 75 Q536.3 76.2 535.8 76.8 Q529 76.9 524 75.3Z" fill="#38aed6"/><g transform="translate(529.6 68) rotate(-37)"><path d="M0 -5 H6 Q9 -5 9 -2 V2 Q9 5 6 5 H0" fill="none" stroke="#2f6e86" stroke-width="1.1"/><ellipse cx="0" cy="0" rx="2.8" ry="5" fill="#9ad8ee" stroke="#2f6e86" stroke-width="1.1"/></g><defs><linearGradient id="gr" x1="0" y1="0" x2="0" y2="1"><stop offset="0" stop-color="#49b8e0"/><stop offset=".35" stop-color="#cfeaf5"/><stop offset=".55" stop-color="#e9e9e9"/><stop offset="1" stop-color="#d5d5d5"/></linearGradient></defs><rect x="550.5" y="62.3" width="15" height="13.5" fill="url(#gr)" stroke="#6e6e6e" stroke-width="1.1"/><rect x="576.3" y="62.3" width="15.5" height="13.5" fill="#fff" stroke="#6e6e6e" stroke-width="1.1"/><circle cx="579" cy="65" r="1.15" fill="#3ab0d8"/><circle cx="583.5" cy="65" r="1.15" fill="#3ab0d8"/><circle cx="588" cy="65" r="1.15" fill="#3ab0d8"/><circle cx="581.2" cy="69" r="1.15" fill="#3ab0d8"/><circle cx="585.7" cy="69" r="1.15" fill="#3ab0d8"/><circle cx="590" cy="69" r="1.15" fill="#3ab0d8"/><circle cx="579" cy="73" r="1.15" fill="#3ab0d8"/><circle cx="583.5" cy="73" r="1.15" fill="#3ab0d8"/><circle cx="588" cy="73" r="1.15" fill="#3ab0d8"/><polygon points="614.80,62.90 622.03,68.15 619.27,76.65 610.33,76.65 607.57,68.15" fill="#b0b0b0" opacity=".8"/><polygon points="613.50,61.90 620.73,67.15 617.97,75.65 609.03,75.65 606.27,67.15" fill="#2d9cc8" stroke="#1b5e78" stroke-width="1"/><polygon points="638.80,62.10 645.84,67.21 643.15,75.49 634.45,75.49 631.76,67.21" fill="#f4f4f4" stroke="#555" stroke-width="1.1"/><path d="M635 66 L642 67 L635 69 L642.5 70.5 L635 72 L642 73.5" fill="none" stroke="#666" stroke-width="0.9"/><circle cx="665.00" cy="62.30" r="1.3" fill="#fff" stroke="#3ab0d8" stroke-width="0.9"/><circle cx="668.33" cy="64.72" r="1.3" fill="#fff" stroke="#3ab0d8" stroke-width="0.9"/><circle cx="671.66" cy="67.14" r="1.3" fill="#fff" stroke="#3ab0d8" stroke-width="0.9"/><circle cx="670.39" cy="71.05" r="1.3" fill="#fff" stroke="#3ab0d8" stroke-width="0.9"/><circle cx="669.11" cy="74.96" r="1.3" fill="#fff" stroke="#3ab0d8" stroke-width="0.9"/><circle cx="665.00" cy="74.96" r="1.3" fill="#fff" stroke="#3ab0d8" stroke-width="0.9"/><circle cx="660.89" cy="74.96" r="1.3" fill="#fff" stroke="#3ab0d8" stroke-width="0.9"/><circle cx="659.61" cy="71.05" r="1.3" fill="#fff" stroke="#3ab0d8" stroke-width="0.9"/><circle cx="658.34" cy="67.14" r="1.3" fill="#fff" stroke="#3ab0d8" stroke-width="0.9"/><circle cx="661.67" cy="64.72" r="1.3" fill="#fff" stroke="#3ab0d8" stroke-width="0.9"/><polygon points="690.80,62.00 697.93,67.18 695.21,75.57 686.39,75.57 683.67,67.18" fill="#fff" stroke="#666" stroke-width="1.1"/><path d="M688 64.5 L689 66 M693.5 64.5 L692.5 66 M685.5 69 H687.5" stroke="#999" stroke-width="0.8"/><path d="M691 69.5 L698 76.3" stroke="#2f9ccc" stroke-width="2"/><circle cx="690.5" cy="69" r="1.6" fill="#2f9ccc"/><polygon points="716.50,61.70 724.39,67.44 721.38,76.71 711.62,76.71 708.61,67.44" fill="#fff" stroke="#c6c6c6" stroke-width="1.2"/><polygon points="716.50,64.50 722.02,68.51 719.91,74.99 713.09,74.99 710.98,68.51" fill="#fff" stroke="#333" stroke-width="1.2"/><path d="M720 65.5 L724.5 61" stroke="#2f9ccc" stroke-width="1.3"/><path d="M725.5 60 L721 61 L724.5 64.5Z" fill="#2f9ccc"/><path d="M739 63.5 H753" stroke="#f7b26a" stroke-width="1"/><path d="M739 67 H753" stroke="#f25a5a" stroke-width="2"/><path d="M739 70.3 H753" stroke="#3aa8e0" stroke-width="1.5"/><path d="M739 73.6 H753" stroke="#28b828" stroke-width="2.4" stroke-linecap="round"/><path d="M764.5 63.5 H779" stroke="#555" stroke-width="1" stroke-dasharray="1 1.2"/><path d="M764.5 67 H779" stroke="#555" stroke-width="1.6" stroke-dasharray="3 1.8"/><path d="M764.5 70.3 H779" stroke="#333" stroke-width="1.4"/><path d="M764.5 73.6 H779" stroke="#333" stroke-width="2.3" stroke-linecap="round"/><text x="795" y="74.6" font-family="Liberation Serif" font-weight="bold" font-size="16" fill="#3a3a3a">A</text><g fill="#fff" stroke="#555" stroke-width="0.95" stroke-linejoin="round"><path d="M829.7 60.2 L833.2 64.2 L831 64.2 L829.7 66.3 L828.4 64.2 L826.2 64.2Z"/><path d="M829.7 77.6 L833.2 73.6 L831 73.6 L829.7 71.5 L828.4 73.6 L826.2 73.6Z"/><path d="M821 69 L825 65.5 V67.7 L827.1 69 L825 70.3 V72.5Z"/><path d="M838.4 69 L834.4 65.5 V67.7 L832.3 69 L834.4 70.3 V72.5Z"/></g><path d="M829.7 66.3 V71.5 M827.1 69 H832.3" stroke="#777" stroke-width="0.8"/><circle cx="829.7" cy="69" r="1" fill="#999"/><path d="M850.5 66 Q852.5 61 858 61 Q864.8 61.5 865.3 68.5 Q865.3 75.5 858 76.3 Q855 76.5 853 74.8 L855 72.8 Q856.3 73.8 858 73.8 Q862.8 73.5 862.8 68.5 Q862.5 64 858 63.8 Q854.5 64 853.3 66.8 L856 68 L848 70 L847.5 63.3 L850.2 65.5" fill="#fff" stroke="#555" stroke-width="1" stroke-linejoin="round"/><rect x="875.2" y="61.2" width="14.2" height="16" fill="none" stroke="#3ab0d8" stroke-width="1.2" stroke-dasharray="1.4 1.2"/><rect x="879" y="66.8" width="6.5" height="6.5" fill="#fff" stroke="#555" stroke-width="1"/><path d="M876.5 76 L879.5 73 M885.5 66.8 L888 64.3" stroke="#555" stroke-width="1.3"/><path d="M889.5 60.8 L889.3 66 L884.3 61Z M875.3 77.5 L875.5 72.3 L880.5 77.3Z" fill="#fff" stroke="#555" stroke-width="1" stroke-linejoin="round"/><path d="M900.5 62 H906 V75 H900.5Z" fill="#f6f6f6" stroke="#eee" stroke-width="0.8"/><path d="M906.5 62 H915.5 L909.5 75.5 H900.5Z" fill="#fff" stroke="#555" stroke-width="1.1" stroke-linejoin="round"/><path d="M926.3 65.2 H935.4 L930.85 72.3Z" fill="#828282"/><path d="M19 92.5 L32.5 97 L28.5 99.5 L35.5 106.5 Q36 107.5 35 108.3 Q34 109 33.2 108.2 L26.3 101.3 L24 105.5Z" fill="none" stroke="#357f9c" stroke-width="1.2" stroke-linejoin="round"/><path d="M24.8 120.5 H31.6 M24.8 120.5 L20.1 126 L22.4 132.5" stroke="#333" stroke-width="0.9" fill="none"/><rect x="23.3" y="119.0" width="3" height="3" fill="#3ab0d8"/><rect x="30.1" y="119.0" width="3" height="3" fill="#3ab0d8"/><rect x="18.6" y="124.5" width="3" height="3" fill="#3ab0d8"/><rect x="20.9" y="131.0" width="3" height="3" fill="#3ab0d8"/><path d="M24.5 124.5 L33 127.2 L30.5 128.5 L35 133 L33.6 134.5 L29 130 L27.6 132.7Z" fill="#fff" stroke="#333" stroke-width="1" stroke-linejoin="round"/><path d="M21 162.4 L33.2 149.3" stroke="#444" stroke-width="1.2"/><rect x="20" y="177" width="13.6" height="10" fill="none" stroke="#555" stroke-width="1.3"/><rect x="20" y="203" width="13.6" height="10" rx="3" fill="none" stroke="#555" stroke-width="1.3"/><ellipse cx="27" cy="233.8" rx="7.4" ry="5.2" fill="none" stroke="#555" stroke-width="1.2"/><path d="M25.5 255.6 L33.3 259.6 L19.8 265.2 L28 270.1Z" fill="none" stroke="#444" stroke-width="1.1" stroke-linejoin="round"/><circle cx="29.6" cy="285.4" r="4.4" fill="none" stroke="#444" stroke-width="1.1"/><circle cx="23.9" cy="291.9" r="4.4" fill="none" stroke="#444" stroke-width="1.1"/><path d="M26 307.5 L22 315" stroke="#3ab0d8" stroke-width="2.4" stroke-linecap="round"/><path d="M21.8 315.5 L21.3 317" stroke="#555" stroke-width="1"/><path d="M20.5 321.5 L22.5 319.5 L24 321.5 L26.5 319 L28 321 L30.5 318.5 L32 320.5 L35 317.8" fill="none" stroke="#333" stroke-width="1"/><path d="M26 333.5 L22 341" stroke="#f08a14" stroke-width="2.4" stroke-linecap="round"/><path d="M21.8 341.5 L21.3 343" stroke="#555" stroke-width="1"/><path d="M20.5 345.5 Q22 348.5 25.5 347.5 Q29 345.5 31 344.7 Q33 344 35 344.5" fill="none" stroke="#333" stroke-width="1.1"/><path d="M24.7 363 L19.8 376.3 H34.7" fill="none" stroke="#d0d0d0" stroke-width="0.9"/><path d="M24.7 363 Q34.5 366 34.7 376.3" fill="none" stroke="#444" stroke-width="1.2"/><polygon points="26.80,389.20 33.27,393.90 30.80,401.50 22.80,401.50 20.33,393.90" fill="none" stroke="#555" stroke-width="1.2" stroke-linejoin="round"/><text x="20" y="430" font-family="Liberation Serif" font-weight="bold" font-size="14" fill="#3a3a3a">A</text><path d="M32.7 418.5 V431.5 M31.2 418.5 H34.2 M31.2 431.5 H34.2" stroke="#3ab0d8" stroke-width="1"/><path d="M19 456 L23 450 L31.5 446.8 L35.5 449.5 L33.5 453.5 L24 459.8 L20 458.5Z" fill="#fff" stroke="#444" stroke-width="0.95" stroke-linejoin="round"/><path d="M23 450 L27 452.5 L35.5 449.5 M27 452.5 L24 459.8" fill="none" stroke="#444" stroke-width="0.95"/><path d="M31 471.5 Q33.5 471.5 32.8 473.5 L28.3 479.5 L26.5 478 L30.5 472.2Z" fill="#fff" stroke="#444" stroke-width="0.95" stroke-linejoin="round"/><path d="M26.5 478 L28.3 479.5 L21.5 488 Q20.5 486.5 21.5 484.5Z" fill="#fff" stroke="#444" stroke-width="0.95" stroke-linejoin="round"/><rect x="19.5" y="520" width="15.3" height="12" fill="#5fb1cf" stroke="#3b8aa7" stroke-width="1"/><rect x="21.8" y="522.2" width="10.8" height="7.6" fill="#9ed8ed" stroke="#6bbcd8" stroke-width="0.7"/><path d="M18.7 545 Q23 543 27 545 Q31 543 35.5 545 V557 Q31 555.3 27 557.7 Q23 555.3 18.7 557Z" fill="#fff" stroke="#666" stroke-width="1"/><path d="M27 545 V557.7" stroke="#666" stroke-width="0.9"/><path d="M20.5 548 Q23 547 25.3 548 M20.5 550.5 Q23 549.5 25.3 550.5 M20.5 553 Q23 552 25.3 553 M28.7 548 Q31 547 33.7 548 M28.7 550.5 Q31 549.5 33.7 550.5 M28.7 553 Q31 552 33.7 553" stroke="#999" stroke-width="0.7" fill="none"/><circle cx="26.8" cy="577.5" r="8.3" fill="#f2f2f2" stroke="#bdbdbd" stroke-width="1"/><circle cx="26.8" cy="577.5" r="7.2" fill="#46a8cf"/><path d="M29.8 572.3C27.6 571.2 23.6 572.2 24.6 575.2 25.5 577.5 29.8 577.5 29.1 580.5 28.6 582.6 25.6 583.3 23 582.1" stroke="#fff" stroke-width="1.5" fill="none" stroke-linecap="round"/><path d="M23.2 616.5 V625.7 L31.3 621.1Z" fill="#888"/><rect x="20" y="672" width="8.5" height="8" fill="none" stroke="#bcbcbc" stroke-width="1"/><rect x="24" y="676" width="8.5" height="8.5" fill="none" stroke="#bcbcbc" stroke-width="1"/><rect x="17.9" y="669.9" width="3.2" height="3.2" fill="#a8d8ea"/><rect x="31.9" y="669.9" width="3.2" height="3.2" fill="#a8d8ea"/><rect x="17.9" y="682.4" width="3.2" height="3.2" fill="#a8d8ea"/><rect x="31.9" y="682.4" width="3.2" height="3.2" fill="#a8d8ea"/><rect x="45.5" y="672" width="7.5" height="7.5" fill="none" stroke="#bcbcbc" stroke-width="1"/><rect x="50" y="676.5" width="8" height="8" fill="none" stroke="#bcbcbc" stroke-width="1"/><rect x="43.9" y="669.9" width="3.2" height="3.2" fill="#a8d8ea"/><rect x="51.4" y="669.9" width="3.2" height="3.2" fill="#a8d8ea"/><rect x="51.4" y="677.9" width="3.2" height="3.2" fill="#a8d8ea"/><rect x="43.9" y="677.9" width="3.2" height="3.2" fill="#a8d8ea"/><rect x="48.4" y="674.9" width="3.2" height="3.2" fill="#a8d8ea"/><rect x="56.9" y="674.9" width="3.2" height="3.2" fill="#a8d8ea"/><rect x="48.4" y="682.9" width="3.2" height="3.2" fill="#a8d8ea"/><rect x="56.9" y="682.9" width="3.2" height="3.2" fill="#a8d8ea"/><rect x="73.7" y="671.7" width="9" height="9" fill="none" stroke="#3a8fa8" stroke-width="1.2"/><rect x="77.5" y="675.5" width="9.5" height="9.5" fill="#fff" stroke="#3a8fa8" stroke-width="1.2"/><path d="M84 672 H89 V676 M74 682 V685 H77" fill="none" stroke="#3a8fa8" stroke-width="1.1" stroke-dasharray="1.2 1"/><rect x="87" y="683.5" width="3.5" height="3" rx="1" fill="#fff" stroke="#3a8fa8" stroke-width="0.9"/><rect x="100" y="671.7" width="8.5" height="8.5" fill="none" stroke="#3a8fa8" stroke-width="1.2"/><rect x="104" y="675.5" width="9.5" height="9" fill="#fff" stroke="#3a8fa8" stroke-width="1.2"/><rect x="126.3" y="671.5" width="8.5" height="8.5" fill="none" stroke="#3a8fa8" stroke-width="1.2"/><rect x="130" y="675" width="9.5" height="9.5" fill="#46aed3" stroke="#3a8fa8" stroke-width="1.2"/><rect x="139.5" y="683.5" width="3.5" height="3" rx="1" fill="#fff" stroke="#3a8fa8" stroke-width="0.9"/><path d="M155 673.5 L159.5 671 L164 673.5 V679 L159.5 681.5 L155 679Z M155 673.5 L159.5 676 L164 673.5 M159.5 676 V681.5" fill="#fff" stroke="#444" stroke-width="1"/><path d="M161.5 677 L166.3 674.3 L171 677 V682.5 L166.3 685.2 L161.5 682.5Z M161.5 677 L166.3 679.7 L171 677 M166.3 679.7 V685.2" fill="#fff" stroke="#3a9cc0" stroke-width="1"/><path d="M181.5 684.5 Q186 676 195.5 671.5 M182 671.5 Q191.5 676 196 684.5" fill="none" stroke="#444" stroke-width="1.1"/><rect x="210.8" y="671" width="7" height="7" fill="#9a9a9a" stroke="#555" stroke-width="1"/><rect x="214.3" y="674.5" width="7" height="7" fill="#eee" stroke="#555" stroke-width="1"/><rect x="217.8" y="678" width="7" height="7" fill="#9a9a9a" stroke="#555" stroke-width="1"/><rect x="237" y="671" width="7" height="7" fill="#9a9a9a" stroke="#555" stroke-width="1"/><rect x="244" y="678" width="7" height="7" fill="#9a9a9a" stroke="#555" stroke-width="1"/><path d="M240.5 678 V681.5 H244 M244 674.5 H247.5 V678" fill="none" stroke="#777" stroke-width="0.9"/><path d="M264.8 677 H271.8 A4.9 4.9 0 1 1 280.8 679.5 V685 H264.8Z" fill="#ebebeb" stroke="#d2d2d2" stroke-width="1" stroke-linejoin="round"/><circle cx="299" cy="678.3" r="6.8" fill="#fff" stroke="#555" stroke-width="1.1"/><circle cx="299" cy="678.3" r="5" fill="none" stroke="#3ab0d8" stroke-width="1.5"/><ellipse cx="299" cy="678.3" rx="1.8" ry="2.5" fill="none" stroke="#555" stroke-width="1"/><path d="M318.8 686 L326 674 L333.5 686Z" fill="#6fc4e0" stroke="#4aaed4" stroke-width="0.8"/><g transform="translate(327.5,678) rotate(45)"><ellipse cx="0" cy="-9.5" rx="3.3" ry="3.8" fill="#cfcfcf" stroke="#666" stroke-width="1"/><path d="M-1.3 -6 L-1.2 5 L0 8 L1.2 5 L1.3 -6Z" fill="#fff" stroke="#555" stroke-width="1"/></g><path d="M352 674.5 L358 670.8 V682 L352 685.5Z" fill="#fff" stroke="#555" stroke-width="1"/><path d="M355 673.5 L361.5 670 V681.5 L355 685Z" fill="#2f9ccc" stroke="#333" stroke-width="0.9"/><path d="M48.5 101 V107.5 M53.5 103.3 V107.5 M58.5 103.3 V107.5 M64.5 103.3 V107.5 M69.5 103.3 V107.5 M74.5 99 V107.5 M79.5 103.3 V107.5 M85.5 103.3 V107.5 M90.5 103.3 V107.5 M95.5 103.3 V107.5 M100.5 101 V107.5 M105.5 103.3 V107.5 M111.5 103.3 V107.5 M116.5 103.3 V107.5 M121.5 103.3 V107.5 M126.5 99 V107.5 M132.5 103.3 V107.5 M137.5 103.3 V107.5 M142.5 103.3 V107.5 M147.5 103.3 V107.5 M152.5 101 V107.5 M158.5 103.3 V107.5 M163.5 103.3 V107.5 M168.5 103.3 V107.5 M173.5 103.3 V107.5 M178.5 99 V107.5 M184.5 103.3 V107.5 M189.5 103.3 V107.5 M194.5 103.3 V107.5 M199.5 103.3 V107.5 M205.5 101 V107.5 M210.5 103.3 V107.5 M215.5 103.3 V107.5 M220.5 103.3 V107.5 M225.5 103.3 V107.5 M231.5 99 V107.5 M236.5 103.3 V107.5 M241.5 103.3 V107.5 M246.5 103.3 V107.5 M252.5 103.3 V107.5 M257.5 101 V107.5 M262.5 103.3 V107.5 M267.5 103.3 V107.5 M272.5 103.3 V107.5 M278.5 103.3 V107.5 M283.5 99 V107.5 M288.5 103.3 V107.5 M293.5 103.3 V107.5 M299.5 103.3 V107.5 M304.5 103.3 V107.5 M309.5 101 V107.5 M314.5 103.3 V107.5 M319.5 103.3 V107.5 M325.5 103.3 V107.5 M330.5 103.3 V107.5 M335.5 99 V107.5 M340.5 103.3 V107.5 M346.5 103.3 V107.5 M351.5 103.3 V107.5 M356.5 103.3 V107.5 M361.5 101 V107.5 M366.5 103.3 V107.5 M372.5 103.3 V107.5 M377.5 103.3 V107.5 M382.5 103.3 V107.5 M387.5 99 V107.5 M393.5 103.3 V107.5 M398.5 103.3 V107.5 M403.5 103.3 V107.5 M408.5 103.3 V107.5 M413.5 101 V107.5 M419.5 103.3 V107.5 M424.5 103.3 V107.5 M429.5 103.3 V107.5 M434.5 103.3 V107.5 M440.5 99 V107.5 M445.5 103.3 V107.5 M450.5 103.3 V107.5 M455.5 103.3 V107.5 M460.5 103.3 V107.5 M466.5 101 V107.5 M471.5 103.3 V107.5 M476.5 103.3 V107.5 M481.5 103.3 V107.5 M486.5 103.3 V107.5 M492.5 99 V107.5 M497.5 103.3 V107.5 M502.5 103.3 V107.5 M507.5 103.3 V107.5 M513.5 103.3 V107.5 M518.5 101 V107.5 M523.5 103.3 V107.5 M528.5 103.3 V107.5" stroke="#747474" stroke-width="1"/><text x="126.3" y="98.8" text-anchor="middle" font-family="Liberation Sans" font-size="10" fill="#3a3a3a">10</text><text x="178.5" y="98.8" text-anchor="middle" font-family="Liberation Sans" font-size="10" fill="#3a3a3a">20</text><text x="230.7" y="98.8" text-anchor="middle" font-family="Liberation Sans" font-size="10" fill="#3a3a3a">30</text><text x="282.9" y="98.8" text-anchor="middle" font-family="Liberation Sans" font-size="10" fill="#3a3a3a">40</text><text x="335.1" y="98.8" text-anchor="middle" font-family="Liberation Sans" font-size="10" fill="#3a3a3a">50</text><text x="387.3" y="98.8" text-anchor="middle" font-family="Liberation Sans" font-size="10" fill="#3a3a3a">60</text><text x="439.5" y="98.8" text-anchor="middle" font-family="Liberation Sans" font-size="10" fill="#3a3a3a">70</text><text x="491.7" y="98.8" text-anchor="middle" font-family="Liberation Sans" font-size="10" fill="#3a3a3a">80</text><path d="M535 93.5 H540.3 M535 98.5 H542.5 M535 103.5 H540.3 M535 109.5 H540.3 M535 114.5 H540.3 M535 119.5 H540.3 M535 124.5 H545 M535 129.5 H540.3 M535 135.5 H540.3 M535 140.5 H540.3 M535 145.5 H540.3 M535 150.5 H542.5 M535 156.5 H540.3 M535 161.5 H540.3 M535 166.5 H540.3 M535 171.5 H540.3 M535 176.5 H545 M535 182.5 H540.3 M535 187.5 H540.3 M535 192.5 H540.3 M535 197.5 H540.3 M535 202.5 H542.5 M535 208.5 H540.3 M535 213.5 H540.3 M535 218.5 H540.3 M535 223.5 H540.3 M535 229.5 H545 M535 234.5 H540.3 M535 239.5 H540.3 M535 244.5 H540.3 M535 249.5 H540.3 M535 255.5 H542.5 M535 260.5 H540.3 M535 265.5 H540.3 M535 270.5 H540.3 M535 276.5 H540.3 M535 281.5 H545 M535 286.5 H540.3 M535 291.5 H540.3 M535 296.5 H540.3 M535 302.5 H540.3 M535 307.5 H542.5 M535 312.5 H540.3 M535 317.5 H540.3 M535 323.5 H540.3 M535 328.5 H540.3 M535 333.5 H545 M535 338.5 H540.3 M535 343.5 H540.3 M535 349.5 H540.3 M535 354.5 H540.3 M535 359.5 H542.5 M535 364.5 H540.3 M535 370.5 H540.3 M535 375.5 H540.3 M535 380.5 H540.3 M535 385.5 H545 M535 390.5 H540.3 M535 396.5 H540.3 M535 401.5 H540.3 M535 406.5 H540.3 M535 411.5 H542.5 M535 417.5 H540.3 M535 422.5 H540.3 M535 427.5 H540.3 M535 432.5 H540.3 M535 437.5 H545 M535 443.5 H540.3 M535 448.5 H540.3 M535 453.5 H540.3 M535 458.5 H540.3 M535 464.5 H542.5 M535 469.5 H540.3 M535 474.5 H540.3 M535 479.5 H540.3 M535 484.5 H540.3 M535 490.5 H545 M535 495.5 H540.3 M535 500.5 H540.3 M535 505.5 H540.3 M535 510.5 H540.3 M535 516.5 H542.5 M535 521.5 H540.3 M535 526.5 H540.3 M535 531.5 H540.3 M535 537.5 H540.3 M535 542.5 H545 M535 547.5 H540.3 M535 552.5 H540.3 M535 557.5 H540.3 M535 563.5 H540.3 M535 568.5 H542.5 M535 573.5 H540.3 M535 578.5 H540.3 M535 584.5 H540.3 M535 589.5 H540.3 M535 594.5 H545 M535 599.5 H540.3 M535 604.5 H540.3 M535 610.5 H540.3 M535 615.5 H540.3 M535 620.5 H542.5 M535 625.5 H540.3 M535 631.5 H540.3 M535 636.5 H540.3 M535 641.5 H540.3" stroke="#747474" stroke-width="1"/><text transform="translate(544.2 124.2) rotate(90)" x="0" y="0" text-anchor="middle" font-family="Liberation Sans" font-size="9.6" fill="#3a3a3a">10</text><text transform="translate(544.2 176.4) rotate(90)" x="0" y="0" text-anchor="middle" font-family="Liberation Sans" font-size="9.6" fill="#3a3a3a">20</text><text transform="translate(544.2 228.6) rotate(90)" x="0" y="0" text-anchor="middle" font-family="Liberation Sans" font-size="9.6" fill="#3a3a3a">30</text><text transform="translate(544.2 280.8) rotate(90)" x="0" y="0" text-anchor="middle" font-family="Liberation Sans" font-size="9.6" fill="#3a3a3a">40</text><text transform="translate(544.2 333.0) rotate(90)" x="0" y="0" text-anchor="middle" font-family="Liberation Sans" font-size="9.6" fill="#3a3a3a">50</text><text transform="translate(544.2 385.2) rotate(90)" x="0" y="0" text-anchor="middle" font-family="Liberation Sans" font-size="9.6" fill="#3a3a3a">60</text><text transform="translate(544.2 437.4) rotate(90)" x="0" y="0" text-anchor="middle" font-family="Liberation Sans" font-size="9.6" fill="#3a3a3a">70</text><text transform="translate(544.2 489.6) rotate(90)" x="0" y="0" text-anchor="middle" font-family="Liberation Sans" font-size="9.6" fill="#3a3a3a">80</text><text transform="translate(544.2 541.8) rotate(90)" x="0" y="0" text-anchor="middle" font-family="Liberation Sans" font-size="9.6" fill="#3a3a3a">90</text><text transform="translate(544.2 594.0) rotate(90)" x="0" y="0" text-anchor="middle" font-family="Liberation Sans" font-size="9.6" fill="#3a3a3a">100</text><path d="M369.5 89 V107.5" stroke="#777" stroke-width="1.2"/><path d="M535 187.5 H554" stroke="#6e6e6e" stroke-width="1.4"/><circle cx="300.5" cy="315" r="153.8" fill="none" stroke="#c0202a" stroke-width="5.4"/><circle cx="300.5" cy="315" r="153.8" fill="none" stroke="#000" stroke-width="4.4"/><path d="M149.5 151.5 H287.5 M313.5 151.5 H450.5 M149.5 478.5 H287.5 M313.5 478.5 H450.5 M136.5 164.5 V302 M136.5 328 V465.5 M463.5 164.5 V302 M463.5 328 V465.5 M300.5 132 V145.5" stroke="#777" stroke-width="1" fill="none"/><rect x="133.5" y="148.5" width="6" height="6" fill="#fff" stroke="#666" stroke-width="1"/><rect x="133.5" y="312" width="6" height="6" fill="#fff" stroke="#666" stroke-width="1"/><rect x="133.5" y="475.5" width="6" height="6" fill="#fff" stroke="#666" stroke-width="1"/><rect x="297.5" y="148.5" width="6" height="6" fill="#fff" stroke="#666" stroke-width="1"/><rect x="297.5" y="475.5" width="6" height="6" fill="#fff" stroke="#666" stroke-width="1"/><rect x="460.5" y="148.5" width="6" height="6" fill="#fff" stroke="#666" stroke-width="1"/><rect x="460.5" y="312" width="6" height="6" fill="#fff" stroke="#666" stroke-width="1"/><rect x="460.5" y="475.5" width="6" height="6" fill="#fff" stroke="#666" stroke-width="1"/><circle cx="300.4" cy="119.3" r="4.3" fill="#14dc14" stroke="#0a7a0a" stroke-width="0.6"/><path d="M125.5 158.5 V280 M125.5 349 V471.2 M118.8 158.5 H131.9 M118.8 471.2 H131.9 M143.4 489.5 H266 M334 489.5 H456.2 M143.4 483.8 V495.8 M456.2 483.8 V495.8" stroke="#777" stroke-width="1" fill="none"/><path d="M125.5 158.8 L121.5 166 H129.5Z M125.5 470.9 L121.5 463.7 H129.5Z M143.7 489.5 L151 485.5 V493.5Z M455.9 489.5 L448.6 485.5 V493.5Z" fill="#fff" stroke="#777" stroke-width="1"/><text x="299.5" y="494.9" text-anchor="middle" font-family="Liberation Sans" font-size="12.5" fill="#8a8a8a">60,00 mm</text><text transform="translate(130.4 314.5) rotate(-90)" x="0" y="0" text-anchor="middle" font-family="Liberation Sans" font-size="12.5" fill="#8a8a8a">60,00 mm</text><path d="M46.5 642 L59.5 620.5 Q60.5 618.5 62.5 618.5 H191 Q193 618.5 194 620.5 L206.5 642" fill="#fff" stroke="#3cb0d7" stroke-width="1.2"/><text x="62.5" y="636.2" font-family="Liberation Sans" font-size="12" fill="#333">Unbenannt-1.studio3</text><circle cx="186" cy="629.3" r="7.2" fill="#fff" stroke="#e4e4e4" stroke-width="1.2"/><path d="M183.5 626 L188.5 632.5 M188.5 626 L183.5 632.5" stroke="#2aa8d8" stroke-width="1.7"/><path d="M558.3 92.3 L561.5 96 L558.3 99.7 M563.3 92.3 L566.5 96 L563.3 99.7" fill="none" stroke="#fff" stroke-width="2.4"/><path d="M562.5 111 L568 120.5 H557Z" fill="#fff"/><path d="M562.5 639.5 L568 630 H557Z" fill="#fff"/><path d="M49.5 650.5 L59.5 645 V656Z" fill="#fff"/><path d="M552.5 650.5 L542.5 645 V656Z" fill="#fff"/><g transform="translate(905 676.7)"><rect x="-2.2" y="-9.3" width="4.4" height="4" rx="1.2" transform="rotate(0)" fill="#3a9fd6"/><rect x="-2.2" y="-9.3" width="4.4" height="4" rx="1.2" transform="rotate(45)" fill="#3a9fd6"/><rect x="-2.2" y="-9.3" width="4.4" height="4" rx="1.2" transform="rotate(90)" fill="#3a9fd6"/><rect x="-2.2" y="-9.3" width="4.4" height="4" rx="1.2" transform="rotate(135)" fill="#3a9fd6"/><rect x="-2.2" y="-9.3" width="4.4" height="4" rx="1.2" transform="rotate(180)" fill="#3a9fd6"/><rect x="-2.2" y="-9.3" width="4.4" height="4" rx="1.2" transform="rotate(225)" fill="#3a9fd6"/><rect x="-2.2" y="-9.3" width="4.4" height="4" rx="1.2" transform="rotate(270)" fill="#3a9fd6"/><rect x="-2.2" y="-9.3" width="4.4" height="4" rx="1.2" transform="rotate(315)" fill="#3a9fd6"/><circle r="6.8" fill="#3a9fd6"/><circle r="3.3" fill="#fff"/></g><path d="M923 681 A7.3 7.3 0 0 1 924.5 670.5" fill="none" stroke="#1d6f8a" stroke-width="2.6"/><path d="M921 679 L924 684.5 L927.5 680Z" fill="#1d6f8a"/><path d="M927.5 668.8 A7.3 7.3 0 0 1 936.3 675" fill="none" stroke="#1fb0e0" stroke-width="2.6"/><path d="M930 666 L925 669 L930 671.5Z" fill="#1fb0e0"/><path d="M935.8 678.5 A7.3 7.3 0 0 1 926 683.6" fill="none" stroke="#8fd2ea" stroke-width="2.6"/><path d="M937.5 676 L935 682.5 L932 677.5Z" fill="#8fd2ea"/></svg>
<div class="a" style="left:55px;top:90px;width:60px;height:15px;background:#fff;border:1px solid #cfcfcf;border-radius:2px"></div>
<div class="t" style="left:59.3px;top:94.5px;font-size:9.6px;color:#555;letter-spacing:-0.45px">56,44 , 22,13</div>
<div class="a" style="left:56px;top:111px;width:76px;height:14px;background:#8ed3ea;border:1px solid #7cc6df"></div>
<div class="t" style="left:59.5px;top:114px;font-size:9px;color:#2d6a80;letter-spacing:-0.45px">DESIGNANSICHT</div>
</body></html>
